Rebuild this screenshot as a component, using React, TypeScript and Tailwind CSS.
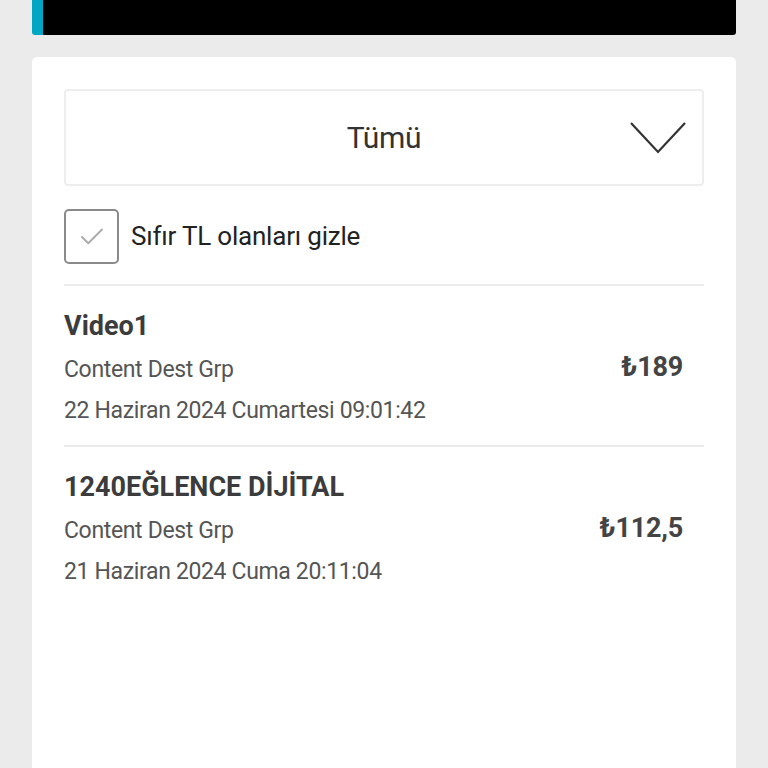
import { Check } from 'lucide-react';

type Charge = {
  title: string;
  provider: string;
  date: string;
  amount: string;
};

const charges: Charge[] = [
  {
    title: 'Video1',
    provider: 'Content Dest Grp',
    date: '22 Haziran 2024 Cumartesi 09:01:42',
    amount: '189',
  },
  {
    title: '1240EĞLENCE DİJİTAL',
    provider: 'Content Dest Grp',
    date: '21 Haziran 2024 Cuma 20:11:04',
    amount: '112,5',
  },
];

function ChargeRow({ charge }: { charge: Charge }) {
  return (
    <div className="flex items-center justify-between border-t-2 border-[#ececec] pt-[20px] pb-[17px]">
      <div className="flex flex-col">
        <div className="text-[27px] leading-[40px] font-bold text-[#3c3c3c]">{charge.title}</div>
        <div className="text-[23px] leading-[47px] tracking-[-0.35px] text-[#555]">{charge.provider}</div>
        <div className="text-[23px] leading-[35px] tracking-[-0.35px] text-[#555]">{charge.date}</div>
      </div>
      <div className="pr-[21px] text-[27px] font-bold tracking-[-0.2px] text-[#444]">₺{charge.amount}</div>
    </div>
  );
}

export default function App() {
  return (
    <div
      className="min-h-[768px] bg-[#ebebeb] px-8"
      style={{ fontFamily: 'Roboto, "Open Sans", sans-serif' }}
    >
      <div className="flex h-[35px] overflow-hidden rounded-b-[3px]">
        <div className="w-[11px] bg-[#00a6c4]" />
        <div className="flex-1 bg-black" />
      </div>

      <div className="mt-[22px] min-h-[711px] rounded-t-[5px] bg-white px-8 pt-8">
        <div className="grid h-[97px] grid-cols-[1fr_auto_1fr] items-center rounded-[4px] border-2 border-[#ededed]">
          <div />
          <div className="text-[30px] tracking-[-0.3px] text-[#333]">Tümü</div>
          <div className="flex justify-end pr-[15px]">
            <svg width="58" height="34" viewBox="0 0 58 34" fill="none">
              <path d="M2 2 L29 31 L56 2" stroke="#333" strokeWidth="2.2" />
            </svg>
          </div>
        </div>

        <label className="mt-[23px] flex items-center gap-[12px]">
          <span className="flex h-[55px] w-[55px] items-center justify-center rounded-[5px] border-2 border-[#8a8a8a]">
            <Check className="h-[30px] w-[30px] text-[#aaa]" strokeWidth={1.5} />
          </span>
          <span className="text-[26px] tracking-[-0.2px] text-[#222]">Sıfır TL olanları gizle</span>
        </label>

        <div className="mt-[20px]">
          {charges.map((c) => (
            <ChargeRow key={c.title} charge={c} />
          ))}
        </div>
      </div>
    </div>
  );
}
